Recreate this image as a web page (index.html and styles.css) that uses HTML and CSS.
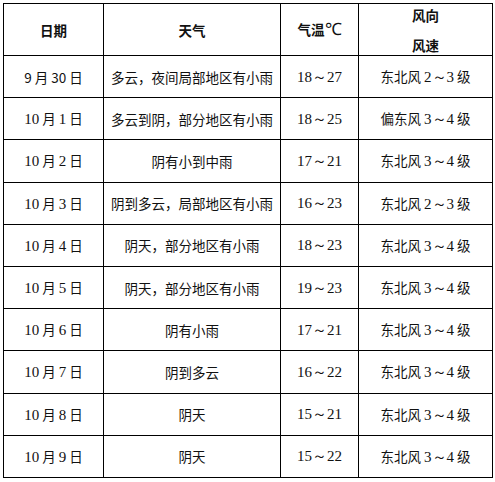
FILE: index.html
```html
<!DOCTYPE html>
<html lang="zh">
<head>
<meta charset="utf-8">
<link rel="stylesheet" href="styles.css">
</head>
<body>
<table class="wx">
  <colgroup>
    <col class="c-date"><col class="c-weather"><col class="c-temp"><col class="c-wind">
  </colgroup>
  <thead>
    <tr class="head">
      <th>日期</th>
      <th>天气</th>
      <th>气温<span class="deg">℃</span></th>
      <th><div class="two">风向<br>风速</div></th>
    </tr>
  </thead>
  <tbody>
    <tr><td>9 月 30 日</td><td>多云，夜间局部地区有小雨</td><td class="num">18～27</td><td>东北风 <span class="n">2～3</span> 级</td></tr>
    <tr><td><span class="n">10</span> 月 <span class="n">1</span> 日</td><td>多云到阴，部分地区有小雨</td><td class="num">18～25</td><td>偏东风 <span class="n">3～4</span> 级</td></tr>
    <tr><td><span class="n">10</span> 月 <span class="n">2</span> 日</td><td>阴有小到中雨</td><td class="num">17～21</td><td>东北风 <span class="n">3～4</span> 级</td></tr>
    <tr><td><span class="n">10</span> 月 <span class="n">3</span> 日</td><td>阴到多云，局部地区有小雨</td><td class="num">16～23</td><td>东北风 <span class="n">2～3</span> 级</td></tr>
    <tr><td><span class="n">10</span> 月 <span class="n">4</span> 日</td><td>阴天，部分地区有小雨</td><td class="num">18～23</td><td>东北风 <span class="n">3～4</span> 级</td></tr>
    <tr><td><span class="n">10</span> 月 <span class="n">5</span> 日</td><td>阴天，部分地区有小雨</td><td class="num">19～23</td><td>东北风 <span class="n">3～4</span> 级</td></tr>
    <tr><td><span class="n">10</span> 月 <span class="n">6</span> 日</td><td>阴有小雨</td><td class="num">17～21</td><td>东北风 <span class="n">3～4</span> 级</td></tr>
    <tr><td><span class="n">10</span> 月 <span class="n">7</span> 日</td><td>阴到多云</td><td class="num">16～22</td><td>东北风 <span class="n">3～4</span> 级</td></tr>
    <tr><td><span class="n">10</span> 月 <span class="n">8</span> 日</td><td>阴天</td><td class="num">15～21</td><td>东北风 <span class="n">3～4</span> 级</td></tr>
    <tr><td><span class="n">10</span> 月 <span class="n">9</span> 日</td><td>阴天</td><td class="num">15～22</td><td>东北风 <span class="n">3～4</span> 级</td></tr>
  </tbody>
</table>
</body>
</html>
```

FILE: styles.css
```css
html, body {
  margin: 0;
  padding: 0;
  background: #fff;
}
body {
  padding: 3px 0 0 3px;
  font-family: "Noto Sans CJK SC", "Liberation Sans", sans-serif;
  font-size: 13.5px;
  color: #111;
}
.wx {
  border-collapse: collapse;
  table-layout: fixed;
  width: 489px;
}
.c-date { width: 100px; }
.c-weather { width: 177px; }
.c-temp { width: 78px; }
.c-wind { width: 134px; }
.wx th, .wx td {
  border: 1px solid #000;
  text-align: center;
  vertical-align: middle;
  padding: 0;
  white-space: nowrap;
  line-height: 18px;
}
.wx th {
  font-weight: bold;
}
.head { height: 52px; }
.wx tbody tr { height: 42.2px; }
.deg {
  font-family: "Liberation Serif", serif;
  font-size: 17px;
  font-weight: normal;
}
.two {
  line-height: 30px;
  height: 51px;
  margin-top: -8px;
}
.num, .n {
  font-family: "Liberation Serif", serif;
  font-size: 15px;
}
```
